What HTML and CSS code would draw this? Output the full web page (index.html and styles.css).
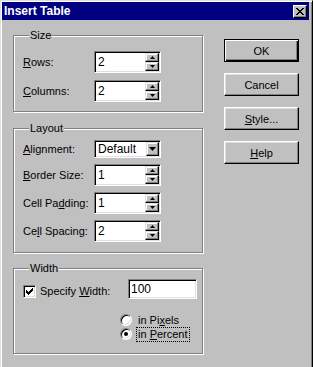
FILE: index.html
```html
<!DOCTYPE html>
<html>
<head>
    <meta charset="UTF-8">
    <title>Insert Table</title>
    <link rel="stylesheet" href="styles.css">
</head>
<body>
    <div class="window">
        <div class="titlebar">
            <span class="title">Insert Table</span>
            <div class="close">
                <svg width="8" height="7" viewBox="0 0 8 7" shape-rendering="crispEdges">
                    <path d="M0 0h2v1h1v1h2V1h1V0h2v1H7v1H6v1H5v1h1v1h1v1h1v1H6V6H5V5H3v1H2v1H0V6h1V5h1V4h1V3H2V2H1V1H0z" fill="#000"/>
                </svg>
            </div>
        </div>

        <div class="content">
            <div class="groups">
                <fieldset class="group group-size">
                    <legend>Size</legend>
                    <div class="rows rows-size">
                        <div class="row">
                            <span class="label"><u>R</u>ows:</span>
                            <div class="field spin-field">
                                <span class="value">2</span>
                                <div class="spin">
                                    <div class="spin-btn"><svg width="5" height="3"><polygon points="2.5,0 5,3 0,3"/></svg></div>
                                    <div class="spin-btn"><svg width="5" height="3"><polygon points="0,0 5,0 2.5,3"/></svg></div>
                                </div>
                            </div>
                        </div>
                        <div class="row">
                            <span class="label"><u>C</u>olumns:</span>
                            <div class="field spin-field">
                                <span class="value">2</span>
                                <div class="spin">
                                    <div class="spin-btn"><svg width="5" height="3"><polygon points="2.5,0 5,3 0,3"/></svg></div>
                                    <div class="spin-btn"><svg width="5" height="3"><polygon points="0,0 5,0 2.5,3"/></svg></div>
                                </div>
                            </div>
                        </div>
                    </div>
                </fieldset>

                <fieldset class="group group-layout">
                    <legend>Layout</legend>
                    <div class="rows rows-layout">
                        <div class="row row-select">
                            <span class="label"><u>A</u>lignment:</span>
                            <div class="field select">
                                <span class="value">Default</span>
                                <div class="drop-btn"><svg width="7" height="4"><polygon points="0,0 7,0 3.5,4"/></svg></div>
                            </div>
                        </div>
                        <div class="row">
                            <span class="label"><u>B</u>order Size:</span>
                            <div class="field spin-field">
                                <span class="value">1</span>
                                <div class="spin">
                                    <div class="spin-btn"><svg width="5" height="3"><polygon points="2.5,0 5,3 0,3"/></svg></div>
                                    <div class="spin-btn"><svg width="5" height="3"><polygon points="0,0 5,0 2.5,3"/></svg></div>
                                </div>
                            </div>
                        </div>
                        <div class="row">
                            <span class="label">Cell Pa<u>d</u>ding:</span>
                            <div class="field spin-field">
                                <span class="value">1</span>
                                <div class="spin">
                                    <div class="spin-btn"><svg width="5" height="3"><polygon points="2.5,0 5,3 0,3"/></svg></div>
                                    <div class="spin-btn"><svg width="5" height="3"><polygon points="0,0 5,0 2.5,3"/></svg></div>
                                </div>
                            </div>
                        </div>
                        <div class="row">
                            <span class="label">Ce<u>l</u>l Spacing:</span>
                            <div class="field spin-field">
                                <span class="value">2</span>
                                <div class="spin">
                                    <div class="spin-btn"><svg width="5" height="3"><polygon points="2.5,0 5,3 0,3"/></svg></div>
                                    <div class="spin-btn"><svg width="5" height="3"><polygon points="0,0 5,0 2.5,3"/></svg></div>
                                </div>
                            </div>
                        </div>
                    </div>
                </fieldset>

                <fieldset class="group group-width">
                    <legend>Width</legend>
                    <div class="row row-check">
                        <div class="checkbox">
                            <svg width="7" height="7" viewBox="0 0 7 7" shape-rendering="crispEdges">
                                <path d="M6 0h1v3H6v1H5v1H4v1H3v1H2V6H1V5H0V2h1v1h1v1h1V3h1V2h1V1h1z" fill="#000"/>
                            </svg>
                        </div>
                        <span class="check-label">Specify <u>W</u>idth:</span>
                        <div class="field width-field"><span class="value">100</span></div>
                    </div>
                    <div class="radios">
                        <div class="radio-row">
                            <div class="radio"></div>
                            <span class="radio-label">in Pi<u>x</u>els</span>
                        </div>
                        <div class="radio-row">
                            <div class="radio checked"><div class="dot"></div></div>
                            <span class="radio-label focus">in <u>P</u>ercent</span>
                        </div>
                    </div>
                </fieldset>
            </div>

            <div class="buttons">
                <div class="btn default">OK</div>
                <div class="btn">Cancel</div>
                <div class="btn"><span><u>S</u>tyle...</span></div>
                <div class="btn"><span><u>H</u>elp</span></div>
            </div>
        </div>
    </div>
</body>
</html>
```

FILE: styles.css
```css
html, body {
    margin: 0;
}
body {
    width: 313px;
    height: 367px;
    overflow: hidden;
    background: #c0c0c0;
    font-family: "Liberation Sans", Arial, sans-serif;
    font-size: 11px;
    color: #000;
}
.window {
    box-sizing: border-box;
    width: 313px;
    height: 367px;
    padding: 1px 3px 0 1px;
    border-top: 1px solid #dfdfdf;
    border-left: 1px solid #dfdfdf;
    border-right: 1px solid #000;
    box-shadow: inset 1px 1px #fff, inset -1px 0 #808080;
}
.titlebar {
    height: 18px;
    background: #000080;
    display: flex;
    align-items: center;
    justify-content: space-between;
    padding: 0 2px 0 2px;
}
.title {
    color: #fff;
    font-weight: bold;
    font-size: 12px;
}
.close {
    box-sizing: border-box;
    width: 14px;
    height: 13px;
    background: #c0c0c0;
    border: 1px solid;
    border-color: #fff #000 #000 #fff;
    box-shadow: inset -1px -1px #808080;
    display: flex;
    align-items: center;
    justify-content: center;
}
.close svg {
    display: block;
}
.content {
    display: flex;
    padding-left: 11px;
}
.groups {
    width: 191px;
    margin-top: 9px;
}
.group {
    box-sizing: border-box;
    width: 190px;
    margin: 0;
    min-width: 0;
    border: 1px solid #808080;
    box-shadow: 1px 1px 0 #fff, inset 1px 1px 0 #fff;
}
.group legend {
    margin-left: 6px;
    padding: 0 1px;
    line-height: 13px;
    background: #c0c0c0;
}
.group-size {
    padding: 9px 0 9px 9px;
}
.group-layout {
    margin-top: 10px;
    padding: 5px 0 10px 9px;
}
.group-width {
    margin-top: 9px;
    padding: 4px 0 12px 9px;
}
.rows {
    display: flex;
    flex-direction: column;
}
.rows-size {
    gap: 7px;
}
.rows-layout {
    gap: 6px;
}
.row {
    display: flex;
    align-items: center;
    height: 22px;
}
.row-select {
    height: 18px;
}
.label {
    width: 71px;
}
.field {
    box-sizing: border-box;
    width: 67px;
    height: 22px;
    background: #fff;
    border: 1px solid;
    border-color: #808080 #fff #fff #808080;
    box-shadow: inset 1px 1px #000, inset -1px -1px #dfdfdf;
    display: flex;
    align-items: center;
    padding: 0 1px 0 3px;
}
.value {
    flex: 1;
    font-size: 12px;
}
.spin {
    width: 14px;
    display: flex;
    flex-direction: column;
    margin-top: 0;
}
.spin-btn, .drop-btn {
    box-sizing: border-box;
    background: #c0c0c0;
    border: 1px solid;
    border-color: #dfdfdf #000 #000 #dfdfdf;
    box-shadow: inset -1px -1px #808080, inset 1px 1px #fff;
    display: flex;
    align-items: center;
    justify-content: center;
}
.spin-btn {
    height: 9px;
}
.spin-btn svg, .drop-btn svg {
    display: block;
}
.select {
    height: 18px;
}
.drop-btn {
    width: 13px;
    height: 14px;
    margin-left: auto;
}
.row-check {
    height: 20px;
}
.checkbox {
    box-sizing: border-box;
    width: 13px;
    height: 13px;
    background: #fff;
    border: 1px solid;
    border-color: #808080 #fff #fff #808080;
    box-shadow: inset 1px 1px #000, inset -1px -1px #dfdfdf;
    display: flex;
    align-items: center;
    justify-content: center;
    margin-top: 4px;
}
.check-label {
    margin-left: 4px;
    width: 88px;
    margin-top: 4px;
}
.width-field {
    width: 69px;
    height: 20px;
    padding-left: 2px;
}
.radios {
    margin-top: 14px;
    margin-left: 97px;
}
.radio-row {
    display: flex;
    align-items: center;
    height: 14px;
}
.radio {
    box-sizing: border-box;
    width: 12px;
    height: 12px;
    border-radius: 50%;
    background: #fff;
    border: 1px solid;
    border-color: #808080 #fff #fff #808080;
    box-shadow: inset 1px 1px #000, inset -1px -1px #dfdfdf;
    display: flex;
    align-items: center;
    justify-content: center;
}
.dot {
    width: 4px;
    height: 4px;
    border-radius: 50%;
    background: #000;
}
.radio-label {
    margin-left: 4px;
    padding: 0 1px;
    line-height: 13px;
    border: 1px solid transparent;
}
.radio-label.focus {
    border: 1px dotted #000;
}
.buttons {
    margin-left: 20px;
    margin-top: 19px;
    display: flex;
    flex-direction: column;
    gap: 11px;
}
.btn {
    box-sizing: border-box;
    width: 75px;
    height: 23px;
    border: 1px solid;
    border-color: #fff #000 #000 #fff;
    box-shadow: inset -1px -1px #808080, inset 1px 1px #dfdfdf;
    display: flex;
    align-items: center;
    justify-content: center;
}
.btn.default {
    border: 1px solid #000;
    box-shadow: inset 1px 1px #fff, inset -1px -1px #000, inset -2px -2px #808080;
}
```
